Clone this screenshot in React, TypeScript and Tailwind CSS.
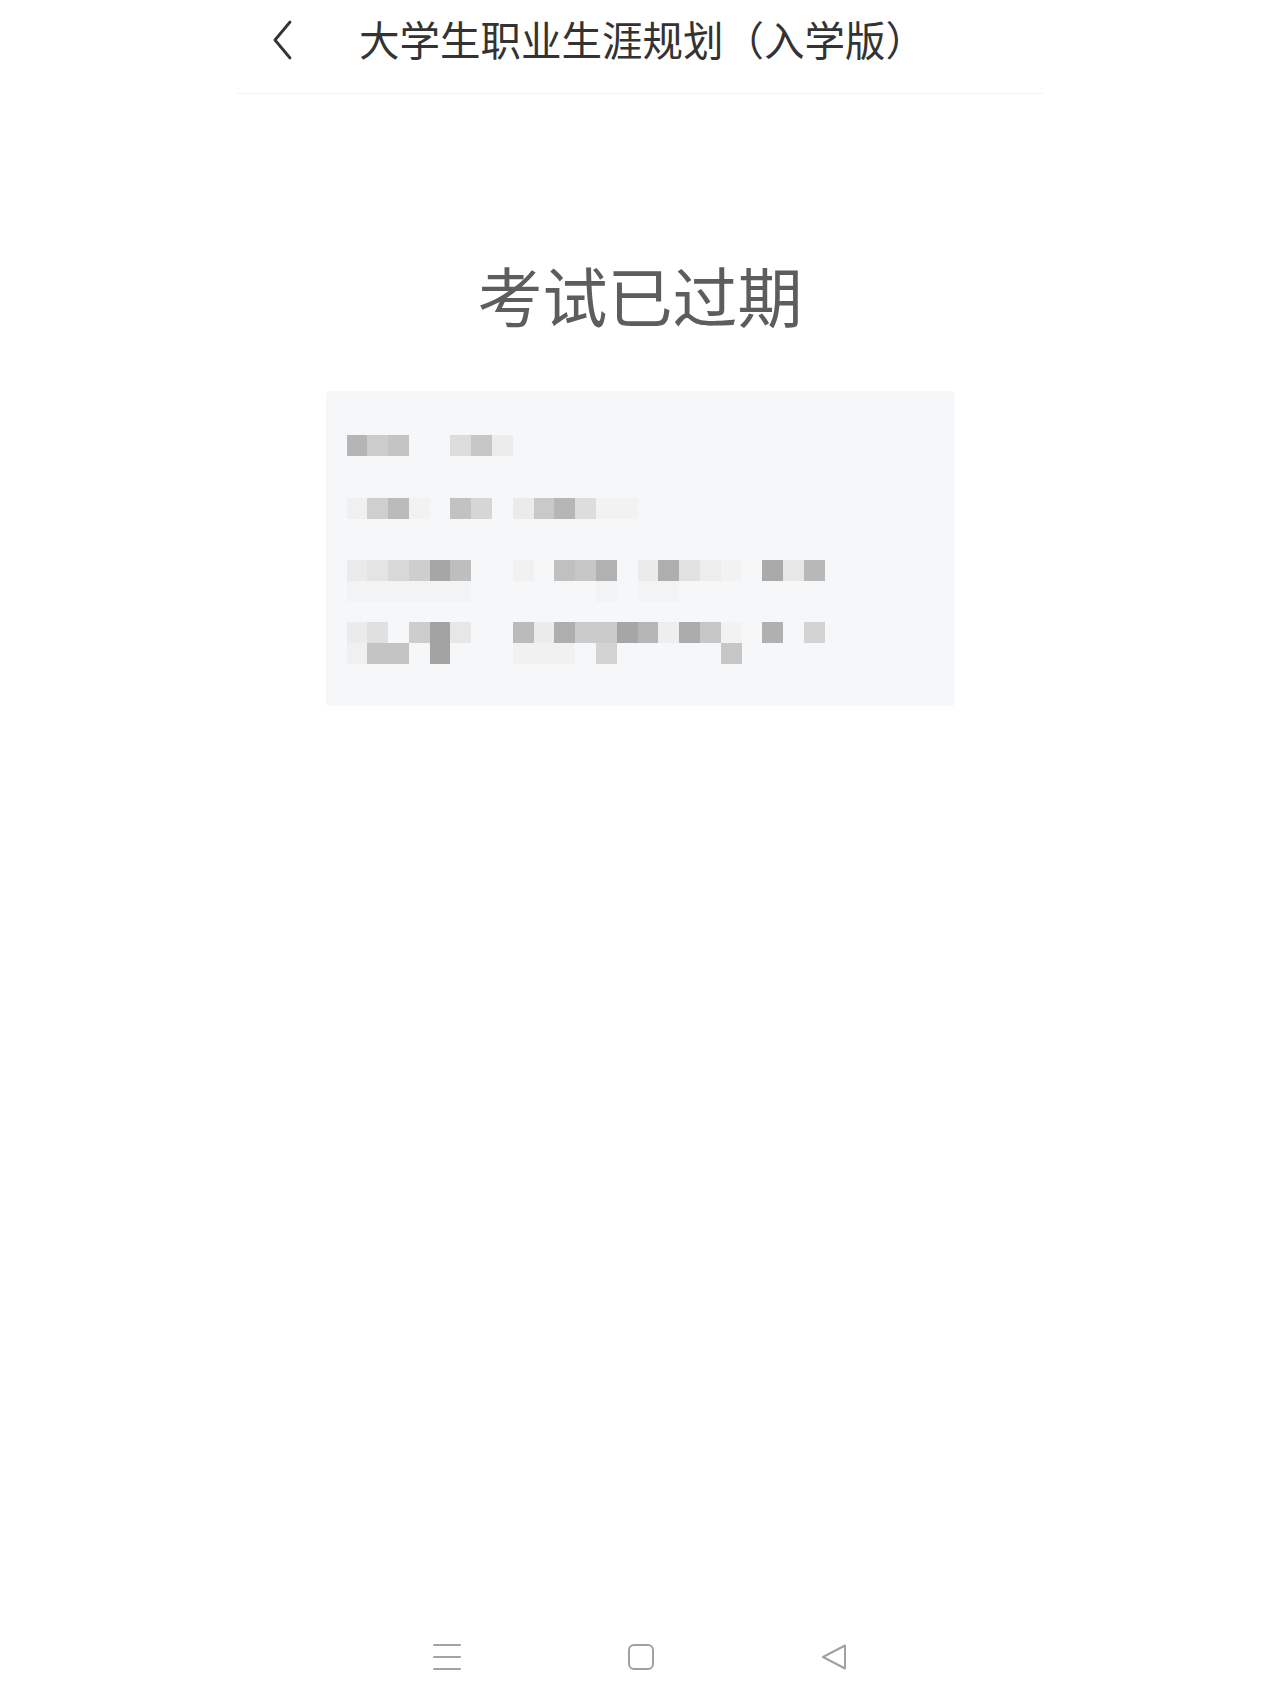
import React from "react";

const R1 = ["bg-[#b5b5b5]", "bg-[#cccccc]", "bg-[#c4c4c4]", "", "", "bg-[#dddddd]", "bg-[#c6c6c6]", "bg-[#ececec]"];
const R2 = ["bg-[#f0f0f0]", "bg-[#cfcfcf]", "bg-[#bbbbbb]", "bg-[#f2f2f2]", "", "bg-[#c2c2c2]", "bg-[#d6d6d6]", "", "bg-[#ebebeb]", "bg-[#c9c9c9]", "bg-[#b6b6b6]", "bg-[#dddddd]", "bg-[#f2f2f2]", "bg-[#f2f2f2]"];
const R3 = ["bg-[#eaeaea]", "bg-[#e4e4e4]", "bg-[#d8d8d8]", "bg-[#cecece]", "bg-[#a6a6a6]", "bg-[#bebebe]", "", "", "bg-[#f1f1f1]", "", "bg-[#c0c0c0]", "bg-[#c6c6c6]", "bg-[#b1b1b1]", "", "bg-[#ebebeb]", "bg-[#aeaeae]", "bg-[#e1e1e1]", "bg-[#ededed]", "bg-[#f2f2f2]", "", "bg-[#aaaaaa]", "bg-[#e7e7e7]", "bg-[#b8b8b8]"];
const R3B = ["bg-[#f2f3f4]", "bg-[#f2f3f4]", "bg-[#f2f3f4]", "bg-[#f2f3f4]", "bg-[#f2f3f4]", "bg-[#f2f3f4]", "", "", "", "", "", "", "bg-[#f2f3f4]", "", "bg-[#f2f3f4]", "bg-[#f2f3f4]", "", "", "", "", "", "", ""];
const R4 = ["bg-[#ebebeb]", "bg-[#e0e0e0]", "", "bg-[#cdcdcd]", "bg-[#a3a3a3]", "bg-[#e7e7e7]", "", "", "bg-[#bbbbbb]", "bg-[#ebebeb]", "bg-[#aeaeae]", "bg-[#cbcbcb]", "bg-[#cbcbcb]", "bg-[#a6a6a6]", "bg-[#b6b6b6]", "bg-[#eeeeee]", "bg-[#ababab]", "bg-[#c6c6c6]", "bg-[#f2f2f2]", "", "bg-[#b0b0b0]", "", "bg-[#d3d3d3]"];
const R4B = ["bg-[#f0f0f0]", "bg-[#c4c4c4]", "bg-[#c4c4c4]", "", "bg-[#a3a3a3]", "", "", "", "bg-[#f1f1f1]", "bg-[#f1f1f1]", "bg-[#f1f1f1]", "", "bg-[#d3d3d3]", "", "", "", "", "", "bg-[#c6c6c6]", "", "", "", ""];

function MosaicRow({ cells }: { cells: string[] }) {
  return (
    <div className="flex">
      {cells.map((c, i) => (
        <div key={i} className={`w-[20.8px] h-[21px] ${c}`} />
      ))}
    </div>
  );
}

export default function App() {
  return (
    <div
      className="min-h-[1706px] w-full bg-white flex flex-col"
      style={{ fontFamily: '"Noto Sans CJK SC", "Noto Sans", sans-serif' }}
    >
      <div className="mx-auto w-[806px]">
        <div className="h-[94px] pb-[14px] flex items-center border-b border-[#f2f2f2]">
          <div className="ml-[33px] w-[24px] flex justify-center">
            <svg width="22" height="40" viewBox="0 0 22 40" fill="none">
              <polyline
                points="19,2 4,20 19,38"
                stroke="#333333"
                strokeWidth="2.8"
                strokeLinecap="round"
                strokeLinejoin="round"
              />
            </svg>
          </div>
          <div className="ml-[65px] text-[40.5px] leading-none text-[#333333]">
            大学生职业生涯规划（入学版）
          </div>
        </div>
      </div>

      <div className="mt-[168px] text-center text-[65px] leading-none text-[#5d5d5d]">
        考试已过期
      </div>

      <div className="mx-auto mt-[64px] w-[629px] h-[315px] bg-[#f6f7f9] rounded-[4px] pt-[44px] pl-[21px] flex flex-col">
        <MosaicRow cells={R1} />
        <div className="mt-[42px]">
          <MosaicRow cells={R2} />
        </div>
        <div className="mt-[41px]">
          <MosaicRow cells={R3} />
          <MosaicRow cells={R3B} />
        </div>
        <div className="mt-[20px]">
          <MosaicRow cells={R4} />
          <MosaicRow cells={R4B} />
        </div>
      </div>

      <div className="mt-auto h-[98px] flex items-center justify-center gap-[165px]">
        <svg width="30" height="30" viewBox="0 0 30 30" fill="none">
          <line x1="2" y1="3" x2="28" y2="3" stroke="#a3a3a3" strokeWidth="2" strokeLinecap="round" />
          <line x1="2" y1="15" x2="28" y2="15" stroke="#a3a3a3" strokeWidth="2" strokeLinecap="round" />
          <line x1="2" y1="27" x2="28" y2="27" stroke="#a3a3a3" strokeWidth="2" strokeLinecap="round" />
        </svg>
        <svg width="28" height="28" viewBox="0 0 28 28" fill="none">
          <rect x="2" y="2" width="24" height="24" rx="5" stroke="#a0a0a0" strokeWidth="2" />
        </svg>
        <svg width="28" height="28" viewBox="0 0 28 28" fill="none">
          <path d="M25 2.5 L3 14 L25 25.5 Z" stroke="#a0a0a0" strokeWidth="2" strokeLinejoin="round" />
        </svg>
      </div>
    </div>
  );
}
